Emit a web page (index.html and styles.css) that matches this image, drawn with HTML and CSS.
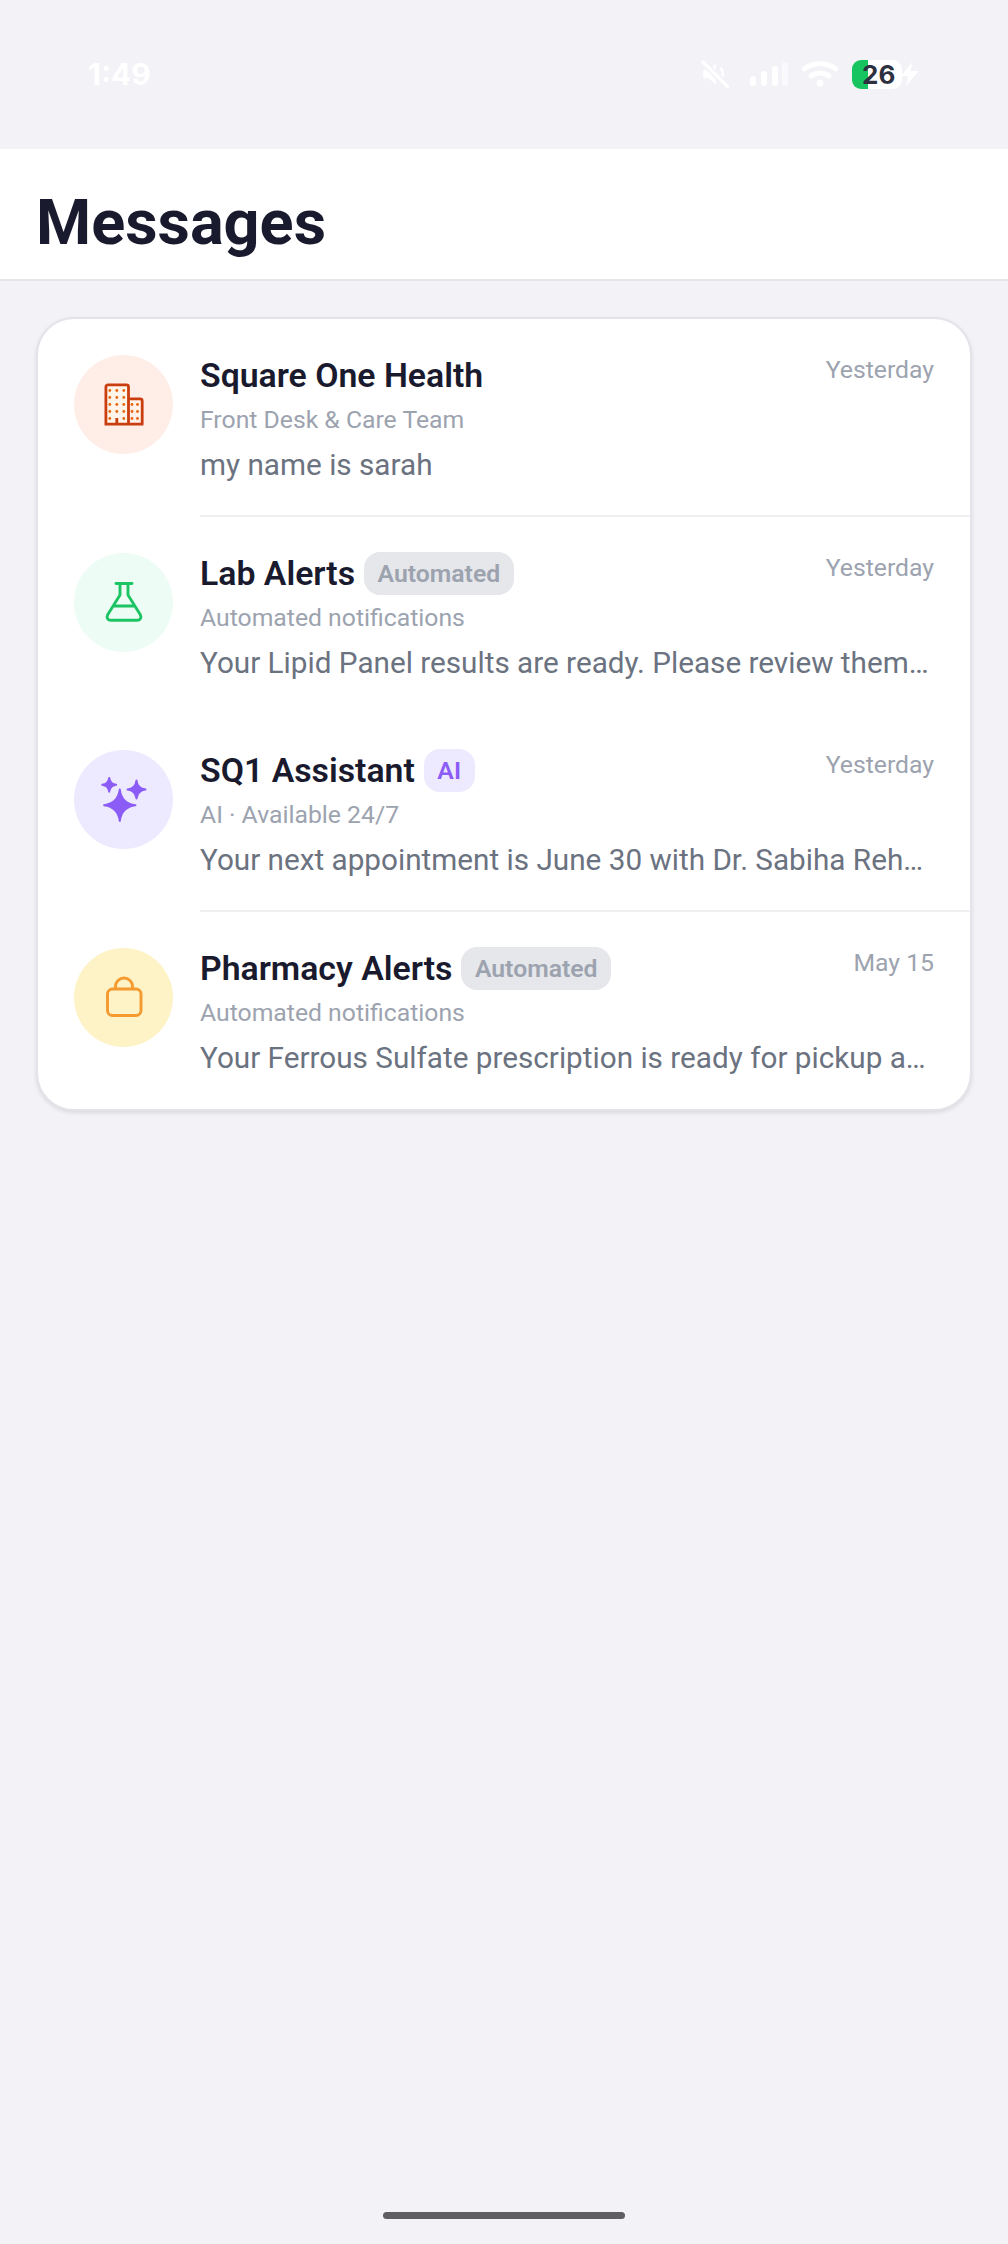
FILE: index.html
```html
<!DOCTYPE html>
<html lang="en">
<head>
<meta charset="UTF-8">
<meta name="viewport" content="width=device-width, initial-scale=1.0">
<title>Messages</title>
<link rel="stylesheet" href="styles.css">
</head>
<body>
<div class="page">
    <div class="status-bar">
        <span class="clock">1:49</span>
        <div class="status-icons">
            <svg class="ic-mute" width="28" height="28" viewBox="0 0 26 26"><path d="M2 9h5l7-6v20l-7-6H2z" fill="#fff"/><path d="M18 7c3 3 3 9 0 12" fill="none" stroke="#fff" stroke-width="2.5"/><path d="M2 2l23 23" stroke="#f2f2f7" stroke-width="6"/><path d="M2 2l23 23" stroke="#fff" stroke-width="3" stroke-linecap="round"/></svg>
            <svg class="ic-signal" width="38" height="24" viewBox="0 0 38 24"><g fill="#fff"><rect x="0" y="14" width="6" height="10" rx="3"/><rect x="11" y="9" width="6" height="15" rx="3"/><rect x="22" y="4" width="6" height="20" rx="3"/><rect x="32" y="0" width="6" height="24" rx="3" opacity=".6"/></g></svg>
            <svg class="ic-wifi" width="36" height="26" viewBox="0 0 36 26"><path d="M2 8c9-7 23-7 32 0M9 15c5-4 13-4 18 0" fill="none" stroke="#fff" stroke-width="5" stroke-linecap="round"/><circle cx="18" cy="22" r="3.5" fill="#fff"/></svg>
            <div class="battery">
                <div class="battery-fill"></div>
                <span class="battery-num">26</span>
            </div>
            <svg class="ic-bolt" width="20" height="24" viewBox="0 0 20 24"><path d="M12 0L1 14h7l-2 10 13-15h-8z" fill="#fff"/></svg>
        </div>
    </div>

    <div class="header">
        <h1>Messages</h1>
    </div>

    <div class="card">
        <div class="row">
            <div class="avatar av-red">
                <svg width="48" height="48" viewBox="0 0 48 48">
                    <path d="M5.900 43.100V5.900a2 2 0 0 1 2-2h18.600a2 2 0 0 1 2 2v37.200M28.500 17.900h11.700a2 2 0 0 1 2 2v23.200M4.500 43.100h39M16.800 43.100v-6" fill="#fff4ea" stroke="#c93d0f" stroke-width="2.800"/>
                    <g fill="#e8650f">
                        <circle cx="9.800" cy="9.500" r="1.400"/><circle cx="16.800" cy="9.500" r="1.400"/><circle cx="23.800" cy="9.500" r="1.400"/>
                        <circle cx="9.800" cy="16.500" r="1.400"/><circle cx="16.800" cy="16.500" r="1.400"/><circle cx="23.800" cy="16.500" r="1.400"/>
                        <circle cx="9.800" cy="23.500" r="1.400"/><circle cx="16.800" cy="23.500" r="1.400"/><circle cx="23.800" cy="23.500" r="1.400"/>
                        <circle cx="9.800" cy="30.500" r="1.400"/><circle cx="16.800" cy="30.500" r="1.400"/><circle cx="23.800" cy="30.500" r="1.400"/>
                        <circle cx="9.800" cy="37.500" r="1.400"/><circle cx="23.800" cy="37.500" r="1.400"/>
                        <circle cx="32" cy="23.500" r="1.400"/><circle cx="37.500" cy="23.500" r="1.400"/>
                        <circle cx="32" cy="30.500" r="1.400"/><circle cx="37.500" cy="30.500" r="1.400"/>
                        <circle cx="32" cy="37.500" r="1.400"/><circle cx="37.500" cy="37.500" r="1.400"/>
                    </g>
                </svg>
            </div>
            <div class="body line">
                <div class="top">
                    <span class="name">Square One Health</span>
                    <span class="time">Yesterday</span>
                </div>
                <div class="sub">Front Desk &amp; Care Team</div>
                <div class="preview">my name is sarah</div>
            </div>
        </div>

        <div class="row">
            <div class="avatar av-green">
                <svg width="48" height="48" viewBox="0 0 48 48">
                    <path d="M16 5.500h16M20 5.500V17L7.800 36.500C6 40 8 42.300 11 42.300h26c3 0 5-2.300 3.200-5.800L28 17V5.500M13.500 28h21" fill="none" stroke="#1cc463" stroke-width="2.900" stroke-linecap="round" stroke-linejoin="round"/>
                </svg>
            </div>
            <div class="body">
                <div class="top">
                    <span class="name">Lab Alerts</span>
                    <span class="pill">Automated</span>
                    <span class="time">Yesterday</span>
                </div>
                <div class="sub">Automated notifications</div>
                <div class="preview">Your Lipid Panel results are ready. Please review them in your portal for details.</div>
            </div>
        </div>

        <div class="row">
            <div class="avatar av-purple">
                <svg width="48" height="48" viewBox="0 0 48 48">
                    <g fill="#8b5cf6" stroke="#8b5cf6" stroke-width="2" stroke-linejoin="round">
                        <path d="M19.800 13.500Q21.500 27.500 35.500 29.200 21.500 31 19.800 44.900 18 31 4.100 29.200 18 27.500 19.800 13.500z"/>
                        <path d="M9.200 1.900Q10 8 16.100 8.800 10 9.600 9.200 15.700 8.400 9.600 2.300 8.800 8.400 8 9.200 1.900z"/>
                        <path d="M36.500 4.500Q37.500 12.500 45.500 13.500 37.500 14.500 36.500 22.500 35.500 14.500 27.500 13.500 35.500 12.500 36.500 4.500z"/>
                    </g>
                </svg>
            </div>
            <div class="body line">
                <div class="top">
                    <span class="name">SQ1 Assistant</span>
                    <span class="pill pill-ai">AI</span>
                    <span class="time">Yesterday</span>
                </div>
                <div class="sub">AI · Available 24/7</div>
                <div class="preview">Your next appointment is June 30 with Dr. Sabiha Rehman at the main clinic.</div>
            </div>
        </div>

        <div class="row">
            <div class="avatar av-yellow">
                <svg width="48" height="48" viewBox="0 0 48 48">
                    <rect x="7.500" y="16" width="33.500" height="26.500" rx="5" fill="none" stroke="#f59a2e" stroke-width="2.900"/>
                    <path d="M15.500 16v-2.500a8.500 8.500 0 0 1 17 0V16" fill="none" stroke="#f59a2e" stroke-width="2.900"/>
                </svg>
            </div>
            <div class="body">
                <div class="top">
                    <span class="name">Pharmacy Alerts</span>
                    <span class="pill">Automated</span>
                    <span class="time">May 15</span>
                </div>
                <div class="sub">Automated notifications</div>
                <div class="preview">Your Ferrous Sulfate prescription is ready for pickup at your pharmacy today.</div>
            </div>
        </div>
    </div>

    <div class="home-bar"></div>
</div>
</body>
</html>
```

FILE: styles.css
```css
/* Basic styling */
body {
    font-family: Roboto, "Liberation Sans", sans-serif;
    margin: 0;
    padding: 0;
    background-color: #f2f2f7;
}
.page {
    height: 2244px;
    display: flex;
    flex-direction: column;
    overflow: hidden;
}

/* Status bar */
.status-bar {
    height: 149px;
    box-sizing: border-box;
    padding: 57px 88px 0 88px;
    display: flex;
    justify-content: space-between;
    align-items: flex-start;
}
.clock {
    font-family: Inter, sans-serif;
    font-size: 30px;
    font-weight: 700;
    line-height: 34px;
    color: #fff;
}
.status-icons {
    display: flex;
    align-items: center;
    height: 34px;
}
.ic-mute { margin-right: 21px; }
.ic-signal { margin-right: 14px; }
.ic-wifi { margin-right: 14px; }
.battery {
    position: relative;
    width: 50px;
    height: 29px;
    border-radius: 9px;
    background-color: #fff;
    overflow: hidden;
}
.battery-fill {
    width: 16px;
    height: 100%;
    background-color: #17c45f;
}
.battery-num {
    position: absolute;
    left: 10px;
    top: 0;
    font-family: Inter, sans-serif;
    font-size: 26px;
    font-weight: 700;
    line-height: 29px;
    color: #2e3040;
}
.ic-bolt { margin-left: -2px; }

/* Header */
.header {
    height: 132px;
    box-sizing: border-box;
    padding: 36px 36px 0 36px;
    background-color: #fff;
    border-bottom: 2px solid #e5e5ea;
}
h1 {
    margin: 0;
    font-size: 63px;
    font-weight: 700;
    line-height: 76px;
    color: #1a1a2e;
}

/* Message list */
.card {
    margin: 36px 36px 0 36px;
    height: 794.4px;
    box-sizing: border-box;
    background-color: #fff;
    border-radius: 38px;
    border: 2px solid #e3e3e9;
    box-shadow: 0 2px 4px rgba(0, 0, 0, 0.1);
    display: flex;
    flex-direction: column;
    overflow: hidden;
}
.row {
    flex: 1;
    display: flex;
    box-sizing: border-box;
    padding-left: 36px;
}
.avatar {
    flex: none;
    width: 99px;
    height: 99px;
    margin-top: 36px;
    border-radius: 50%;
    display: flex;
    align-items: center;
    justify-content: center;
}
.av-red { background-color: #ffeee8; }
.av-green { background-color: #edfcf5; }
.av-purple { background-color: #ede9fe; }
.av-yellow { background-color: #fef3c7; }
.body {
    flex: 1;
    min-width: 0;
    margin-left: 27px;
    padding: 35px 36px 0 0;
}
.line {
    border-bottom: 2px solid #f0f0f3;
}
.top {
    display: flex;
    align-items: center;
    height: 43px;
}
.name {
    font-size: 33.8px;
    font-weight: 600;
    color: #1a1a2e;
}
.pill {
    margin-left: 9px;
    height: 43px;
    padding: 0 13.5px;
    border-radius: 16px;
    background-color: #e5e7eb;
    font-size: 24.75px;
    font-weight: 600;
    line-height: 43px;
    color: #9ca3af;
}
.pill-ai {
    background-color: #ede9fe;
    color: #8b5cf6;
}
.time {
    margin-left: auto;
    margin-top: 1px;
    align-self: flex-start;
    font-size: 24.75px;
    line-height: 30px;
    color: #9ca3af;
}
.sub {
    margin-top: 7px;
    font-size: 24.75px;
    line-height: 32px;
    color: #9ca3af;
}
.preview {
    margin-top: 10px;
    font-size: 29.7px;
    line-height: 38px;
    color: #6b7280;
    white-space: nowrap;
    overflow: hidden;
    text-overflow: ellipsis;
}

/* Home indicator */
.home-bar {
    width: 242px;
    height: 7px;
    margin: auto auto 25px auto;
    border-radius: 4px;
    background-color: #5f5f63;
}
```
